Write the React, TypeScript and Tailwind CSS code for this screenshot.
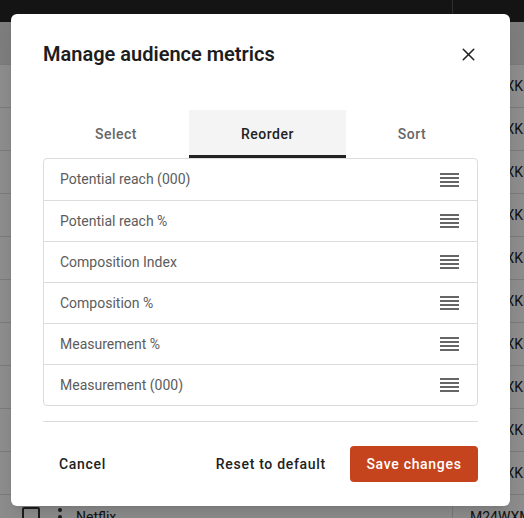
import { X } from "lucide-react";

const metrics = [
  "Potential reach (000)",
  "Potential reach %",
  "Composition Index",
  "Composition %",
  "Measurement %",
  "Measurement (000)",
];

function DragHandle() {
  return (
    <svg width="19" height="14" viewBox="0 0 19 14" className="text-[#666]">
      <rect x="0" y="0" width="19" height="2" fill="currentColor" />
      <rect x="0" y="4" width="19" height="2" fill="currentColor" />
      <rect x="0" y="8" width="19" height="2" fill="currentColor" />
      <rect x="0" y="12" width="19" height="2" fill="currentColor" />
    </svg>
  );
}

function BackgroundTable() {
  return (
    <div className="flex h-full w-full flex-col overflow-hidden bg-white text-[14px] text-[#222]">
      <div className="flex h-[22px] shrink-0 bg-[#262626]">
        <div className="flex-1" />
        <div className="w-[72px] border-l border-[#555]" />
      </div>
      <div className="flex h-[42px] shrink-0 bg-[#e4e4e4]">
        <div className="flex-1" />
        <div className="w-[72px] border-l border-[#d0d0d0]" />
      </div>
      {Array.from({ length: 10 }).map((_, i) => (
        <div key={i} className="flex h-[43px] shrink-0 border-t border-[#ddd]">
          <div className="flex-1" />
          <div className="flex w-[72px] items-center overflow-hidden whitespace-nowrap border-l border-[#ddd] pl-[12px]">
            M24WXKM
          </div>
        </div>
      ))}
      <div className="flex h-[43px] shrink-0 border-t border-[#ddd]">
        <div className="flex items-start pl-[22px] pt-[12px]">
          <div className="h-[18px] w-[18px] rounded-[2px] border-2 border-[#333]" />
          <div className="ml-[18px] flex flex-col gap-[3px] pt-[1px]">
            <span className="h-[4px] w-[4px] rounded-full bg-[#333]" />
            <span className="h-[4px] w-[4px] rounded-full bg-[#333]" />
            <span className="h-[4px] w-[4px] rounded-full bg-[#333]" />
          </div>
          <span className="ml-[14px] leading-[20px]">Netflix</span>
        </div>
        <div className="flex-1" />
        <div className="flex w-[72px] items-start overflow-hidden whitespace-nowrap border-l border-[#ddd] pl-[17px] pt-[12px] leading-[20px]">
          M24WXM
        </div>
      </div>
    </div>
  );
}

export default function App() {
  return (
    <div className="relative h-[518px] w-[524px] overflow-hidden font-['Roboto',sans-serif]">
      <BackgroundTable />
      <div className="absolute inset-0 bg-black/45" />

      <div className="absolute left-[11px] top-[14px] flex h-[492px] w-[499px] flex-col rounded-[6px] bg-white px-[32px] pb-[23px] pt-[26px] shadow-lg">
        <div className="flex h-[28px] items-center justify-between">
          <h2 className="text-[20px] font-semibold text-[#1d1d1d]">
            Manage audience metrics
          </h2>
          <button className="-mr-[2px] flex h-[24px] w-[24px] items-center justify-center text-[#222]">
            <X size={21} strokeWidth={1.75} />
          </button>
        </div>

        <div className="mt-[42px] flex h-[48px] shrink-0 text-[14px] font-medium tracking-[0.5px]">
          <button className="flex w-[146px] items-center justify-center text-[#666]">
            Select
          </button>
          <button className="flex w-[157px] items-center justify-center border-b-[3px] border-[#222] bg-[#f4f4f4] pt-[3px] text-[#222]">
            Reorder
          </button>
          <button className="flex flex-1 items-center justify-center text-[#666]">
            Sort
          </button>
        </div>

        <div className="flex shrink-0 flex-col rounded-[4px] border border-[#dcdcdc]">
          {metrics.map((m, i) => (
            <div
              key={m}
              className={`flex h-[41px] items-center justify-between pl-[16px] pr-[18px] ${
                i > 0 ? "border-t border-[#dcdcdc]" : ""
              }`}
            >
              <span className="text-[14px] text-[#5c5c5c]">{m}</span>
              <DragHandle />
            </div>
          ))}
        </div>

        <div className="mt-[15px] h-px shrink-0 bg-[#dcdcdc]" />

        <div className="mt-[24px] flex items-center justify-between text-[14px] font-medium tracking-[0.7px]">
          <button className="h-[36px] px-[16px] text-[#222]">Cancel</button>
          <div className="flex items-center gap-[8px]">
            <button className="h-[36px] px-[16px] text-[#222]">
              Reset to default
            </button>
            <button className="h-[36px] w-[128px] rounded-[4px] bg-[#c5441e] text-white">
              Save changes
            </button>
          </div>
        </div>
      </div>
    </div>
  );
}
